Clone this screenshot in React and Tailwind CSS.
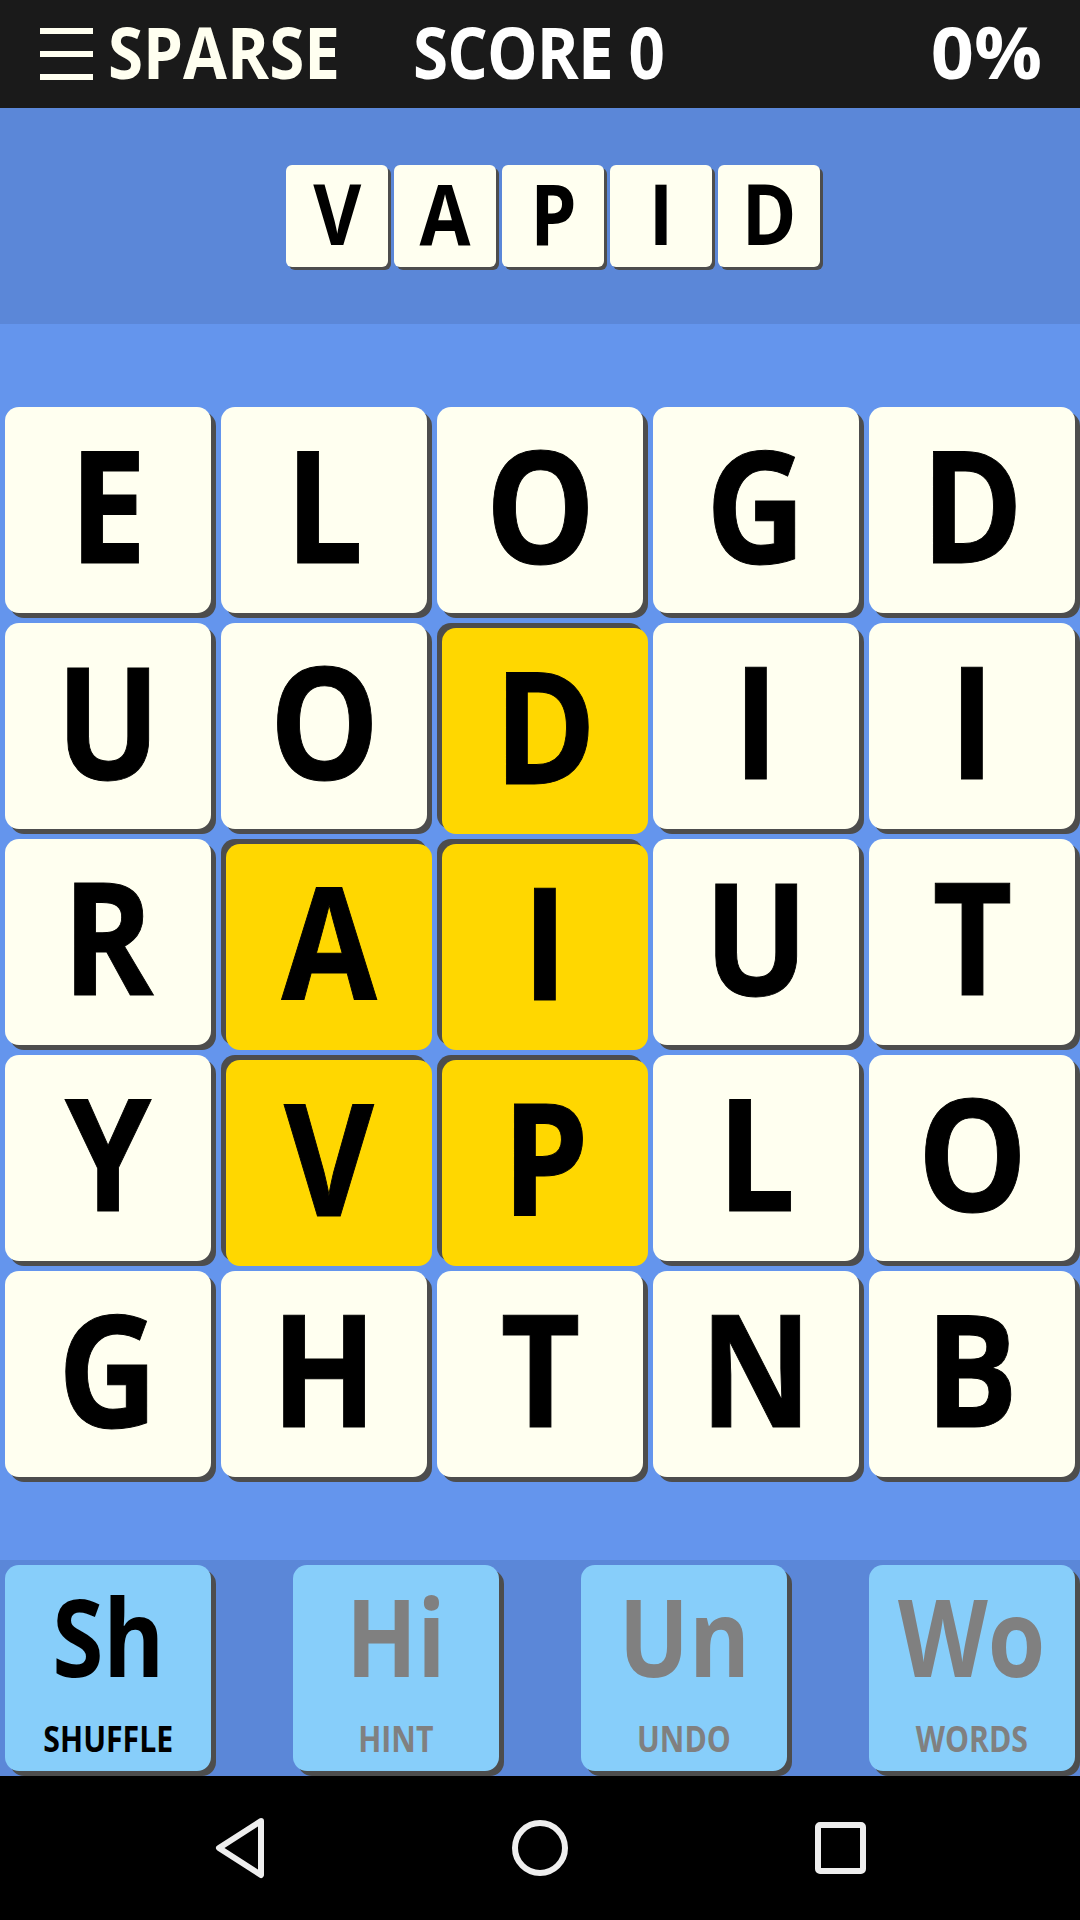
const rows = ["ELOGD", "UODII", "RAIUT", "YVPLO", "GHTNB"];
const selected = new Set(["1,2", "2,1", "2,2", "3,1", "3,2"]);
const tools = [
  { big: "Sh", label: "SHUFFLE", on: true },
  { big: "Hi", label: "HINT" },
  { big: "Un", label: "UNDO" },
  { big: "Wo", label: "WORDS" },
];
const font = "font-['Open_Sans','Noto_Sans',sans-serif] font-bold";

function Tile({ letter, on }) {
  return (
    <div
      className={
        on
          ? "flex h-[206px] w-[206px] translate-x-[5px] translate-y-[5px] items-center justify-center rounded-[14px] bg-[#ffd700] pb-[16px] shadow-[-5px_-5px_0_#4d4d4d]"
          : "flex h-[206px] w-[206px] items-center justify-center rounded-[14px] bg-[#fffff0] pb-[16px] shadow-[5px_5px_0_#4d4d4d]"
      }
    >
      <span className="scale-x-[0.88] text-[157px] leading-none text-black [-webkit-text-stroke:1px_black]">{letter}</span>
    </div>
  );
}

export default function App() {
  return (
    <div className={`flex h-[1920px] w-[1080px] flex-col overflow-hidden bg-[#6495ed] ${font}`}>
      <header className="flex h-[108px] items-center bg-[#1a1a1a] pb-[6px] pl-[40px] pr-[38px] text-[72px] leading-none">
        <div className="mt-[6px] flex h-[52px] w-[53px] flex-col justify-between">
          <div className="h-[6px] bg-[#fffff0]" />
          <div className="h-[6px] bg-[#fffff0]" />
          <div className="h-[6px] bg-[#fffff0]" />
        </div>
        <span className="ml-[15px] w-[229px] origin-left scale-x-[0.885] whitespace-nowrap text-[#fffff0]">SPARSE</span>
        <span className="ml-[76px] w-[250px] origin-left scale-x-[0.885] whitespace-nowrap tracking-[-1px] text-white">SCORE 0</span>
        <span className="ml-auto origin-right scale-x-[1.05] whitespace-nowrap text-white">0%</span>
      </header>

      <section className="flex h-[216px] items-center justify-center gap-[6px] bg-[#5b87d8] pl-[26px]">
        {"VAPID".split("").map((c, i) => (
          <div
            key={i}
            className="flex h-[102px] w-[102px] items-center justify-center rounded-[6px] bg-[#fffff0] pb-[6px] shadow-[3px_3px_0_#4d4d4d]"
          >
            <span className="scale-x-[0.88] text-[84px] leading-none text-black">{c}</span>
          </div>
        ))}
      </section>

      <main className="grid h-[1236px] grid-cols-[repeat(5,206px)] content-start gap-[10px] px-[5px] pt-[83px]">
        {rows.map((row, r) =>
          row.split("").map((c, col) => <Tile key={`${r}-${col}`} letter={c} on={selected.has(`${r},${col}`)} />)
        )}
      </main>

      <section className="flex h-[216px] justify-between bg-[#5b87d8] px-[5px] pt-[5px]">
        {tools.map((t) => (
          <div
            key={t.label}
            className={`flex h-[206px] w-[206px] flex-col items-center rounded-[14px] bg-[#87cefa] shadow-[5px_5px_0_#4d4d4d] ${
              t.on ? "text-black" : "text-[#808080]"
            }`}
          >
            <span className="mt-[11px] h-[120px] scale-x-[0.86] text-[108px] leading-[120px]">{t.big}</span>
            <span className="mt-[25px] scale-x-[0.84] whitespace-nowrap text-[36px] leading-[36px]">{t.label}</span>
          </div>
        ))}
      </section>

      <nav className="flex h-[144px] items-center justify-center bg-black">
        <svg width="1080" height="144" viewBox="0 0 1080 144" fill="none" stroke="#eeeeee" strokeWidth="6" strokeLinejoin="round">
          <path d="M261 45 L219 72 L261 99 Z" />
          <circle cx="540" cy="72" r="25" />
          <rect x="818" y="49" width="45" height="46" rx="2" />
        </svg>
      </nav>
    </div>
  );
}
